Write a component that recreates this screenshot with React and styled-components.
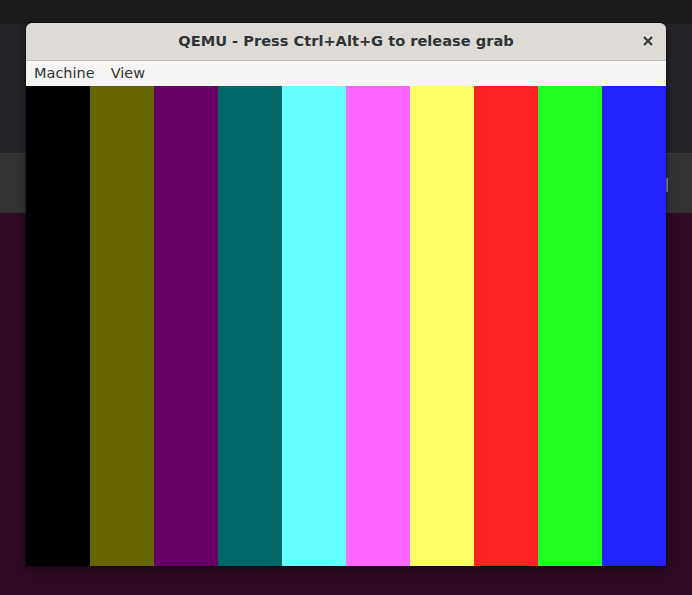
import React from "react"
import styled, { createGlobalStyle } from 'styled-components'

const GlobalStyle = createGlobalStyle`
    html, body {
        margin: 0;
        padding: 0;
        background: #2c0a22;
        font-family: "DejaVu Sans", "Liberation Sans", sans-serif;
    }
`

const Desktop = styled.div`
    position: relative;
    width: 692px;
    height: 595px;
    overflow: hidden;
    display: flex;
    flex-direction: column;
`

const TopBar = styled.div`
    height: 24px;
    background-color: #1d1d1d;
`

const Backdrop = styled.div`
    height: 129px;
    background-color: #242328;
`

const Panel = styled.div`
    height: 59px;
    background-color: #333333;
    border-top: 1px solid #3d3d3d;
`

const Wallpaper = styled.div`
    flex: 1;
    background-color: #2c0a22;
`

const Handle = styled.div`
    position: absolute;
    left: 666px;
    top: 178px;
    width: 2px;
    height: 14px;
    background-color: #8e8e92;
`

const Window = styled.div`
    position: absolute;
    left: 26px;
    top: 23px;
    width: 640px;
    display: flex;
    flex-direction: column;
    border-radius: 6px 6px 0 0;
    overflow: hidden;
    box-shadow: 0 2px 8px rgba(0, 0, 0, 0.45), 0 0 0 1px rgba(0, 0, 0, 0.25);
`

const TitleBar = styled.div`
    position: relative;
    height: 37px;
    background-color: #dedbd7;
    border-bottom: 1px solid #c3bfba;
    display: flex;
    align-items: center;
    justify-content: center;
`

const Title = styled.div`
    font-size: 14.6px;
    font-weight: bold;
    color: #2e3436;
    margin-bottom: 2px;
`

const CloseButton = styled.div`
    position: absolute;
    right: 12px;
    top: 12px;
    width: 12px;
    height: 12px;
    display: grid;
    place-items: center;
`

const MenuBar = styled.div`
    height: 25px;
    background-color: #f6f5f4;
    display: flex;
    align-items: center;
    padding: 0 0 2px 8px;
    box-sizing: border-box;
    gap: 16px;
`

const MenuItem = styled.div`
    font-size: 14.5px;
    color: #2e3436;
`

const Screen = styled.div`
    height: 480px;
    display: grid;
    grid-template-columns: repeat(10, 64px);
`

const Bar = styled.div`
    background-color: ${p => p.color};
`

const colors = [
    "#000000", "#666600", "#660066", "#006666", "#66ffff",
    "#ff66ff", "#ffff66", "#ff2222", "#22ff22", "#2222ff",
]

const App = () => {
    return (
        <Desktop>
            <GlobalStyle />
            <TopBar />
            <Backdrop />
            <Panel />
            <Wallpaper />
            <Handle />
            <Window>
                <TitleBar>
                    <Title>QEMU - Press Ctrl+Alt+G to release grab</Title>
                    <CloseButton>
                        <svg width="10" height="10" viewBox="0 0 10 10">
                            <path d="M1 1 L9 9 M9 1 L1 9" stroke="#2e3436" strokeWidth="2" />
                        </svg>
                    </CloseButton>
                </TitleBar>
                <MenuBar>
                    <MenuItem>Machine</MenuItem>
                    <MenuItem>View</MenuItem>
                </MenuBar>
                <Screen>
                    {colors.map(c => <Bar key={c} color={c} />)}
                </Screen>
            </Window>
        </Desktop>
    )
}

export default App
